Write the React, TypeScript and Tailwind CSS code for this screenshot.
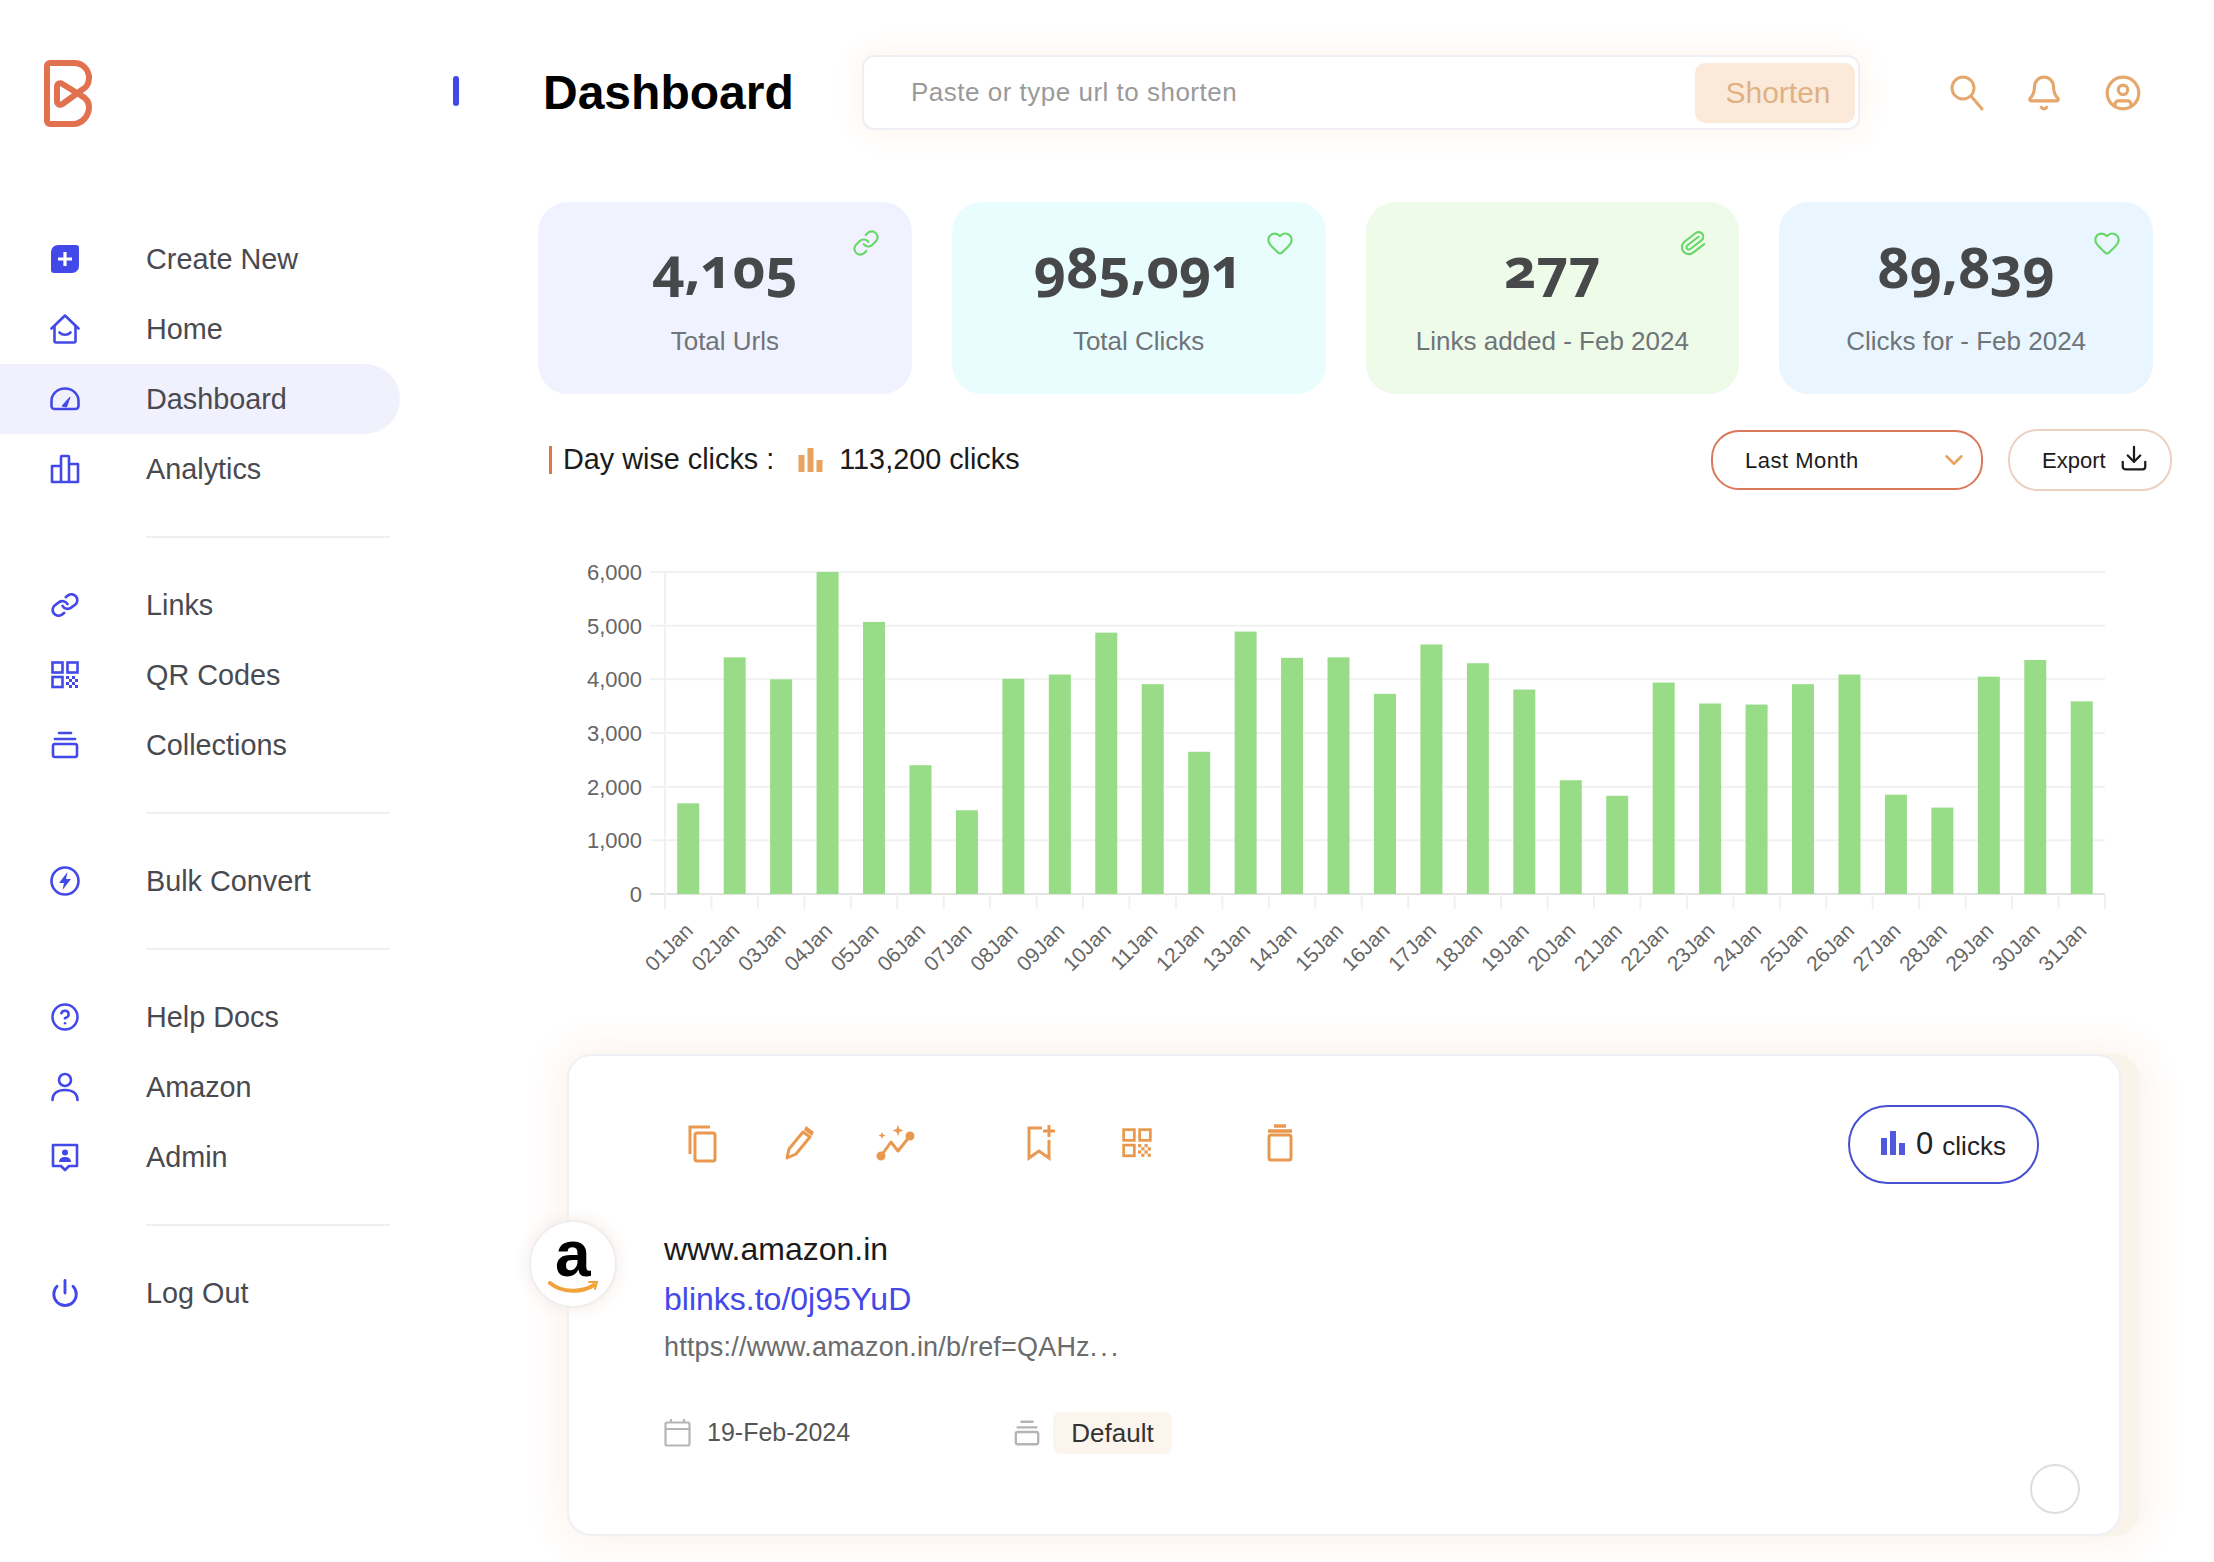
import { Bell, CircleHelp, CircleUser, Heart, Link as LinkIcon, Paperclip, Power, ChevronDown, Download } from "lucide-react";
import type { ReactNode } from "react";

const QrIcon = ({ size = 30 }: { size?: number }) => (
	<svg viewBox="0 0 30 30" width={size} height={size} fill="none" stroke="currentColor" strokeWidth="2.6">
		<rect x="2.5" y="2.5" width="10" height="10" />
		<rect x="17.5" y="2.5" width="10" height="10" />
		<rect x="2.5" y="17" width="10" height="10" />
		<g fill="currentColor" stroke="none">
			<rect x="16" y="16" width="3" height="3" />
			<rect x="22" y="16" width="3" height="3" />
			<rect x="19" y="19" width="3" height="3" />
			<rect x="25" y="19" width="3" height="3" />
			<rect x="16" y="22" width="3" height="3" />
			<rect x="22" y="22" width="3" height="3" />
			<rect x="19" y="25" width="3" height="3" />
			<rect x="25" y="25" width="3" height="3" />
		</g>
	</svg>
);

const StackIcon = ({ size = 30 }: { size?: number }) => (
	<svg viewBox="0 0 30 30" width={size} height={size} fill="none" stroke="currentColor" strokeWidth="2.6" strokeLinecap="round">
		<path d="M9 3h12" />
		<path d="M5 9h20" />
		<rect x="3" y="14" width="24" height="13" rx="2" />
	</svg>
);

const BarsIcon = ({ className }: { className: string }) => (
	<svg viewBox="0 0 24 24" className={className} fill="currentColor">
		<rect x="0" y="7" width="6" height="17" />
		<rect x="9" y="0" width="6" height="24" />
		<rect x="18" y="12" width="6" height="12" />
	</svg>
);

const navIcons: Record<string, ReactNode> = {
	create: (
		<svg viewBox="0 0 30 30" className="w-[30px] h-[30px]">
			<path d="M8 1h18a3 3 0 0 1 3 3v18a7 7 0 0 1-7 7H4a3 3 0 0 1-3-3V8a7 7 0 0 1 7-7z" fill="#4349e8" />
			<path d="M15 8v14M8 15h14" stroke="#fff" strokeWidth="3.2" />
		</svg>
	),
	home: (
		<svg viewBox="0 0 30 30" className="w-[30px] h-[30px]" fill="none" stroke="currentColor" strokeWidth="2.6" strokeLinejoin="round" strokeLinecap="round">
			<path d="M1.5 14.5 15 1.5l13.5 13" />
			<path d="M4.5 12v15a1.5 1.5 0 0 0 1.5 1.5h18a1.5 1.5 0 0 0 1.5-1.5V12" />
			<path d="M9.5 18.5c3 3 8 3 11 0" />
		</svg>
	),
	gauge: (
		<svg viewBox="0 0 30 24" className="w-[30px] h-[24px]" fill="none" stroke="currentColor" strokeWidth="2.6" strokeLinejoin="round">
			<path d="M1.5 14a13.5 12.5 0 0 1 27 0v5a3 3 0 0 1-3 3h-21a3 3 0 0 1-3-3z" />
			<path d="M12 19 20 10l-3.500 10z" fill="currentColor" strokeWidth="1" />
		</svg>
	),
	bars: (
		<svg viewBox="0 0 30 30" className="w-[30px] h-[30px]" fill="none" stroke="currentColor" strokeWidth="2.6" strokeLinejoin="round">
			<path d="M2 12h9v16H2zM11 3a1 1 0 0 1 1-1h6a1 1 0 0 1 1 1v25h-8zM19 10h9v18h-9z" />
		</svg>
	),
	link: <LinkIcon size={28} strokeWidth={2.3} className="rotate-[8deg]" />,
	qr: <QrIcon />,
	stack: <StackIcon />,
	bolt: (
		<svg viewBox="0 0 30 30" className="w-[30px] h-[30px]" fill="none" stroke="currentColor" strokeWidth="2.6">
			<circle cx="15" cy="15" r="13.500" />
			<path d="M17.500 6 9 17h5l-1.500 7L21 13h-5z" fill="currentColor" stroke="none" />
		</svg>
	),
	help: <CircleHelp size={34} strokeWidth={2} />,
	user: (
		<svg viewBox="0 0 30 30" className="w-[30px] h-[30px]" fill="none" stroke="currentColor" strokeWidth="2.6" strokeLinecap="round">
			<circle cx="15" cy="8" r="6" />
			<path d="M2.500 28c0-7 5.500-10 12.500-10s12.500 3 12.500 10" />
		</svg>
	),
	admin: (
		<svg viewBox="0 0 30 30" className="w-[30px] h-[30px]" fill="none" stroke="currentColor" strokeWidth="2.6" strokeLinejoin="round">
			<path d="M3 3h24v21h-8l-4 4-4-4H3z" />
			<circle cx="15" cy="10.500" r="3" fill="currentColor" stroke="none" />
			<path d="M9 20c0-3.500 2.500-5 6-5s6 1.500 6 5z" fill="currentColor" stroke="none" />
		</svg>
	),
	power: <Power size={30} strokeWidth={2.3} />,
};

const navGroups = [
	[
		{ label: "Create New", icon: "create" },
		{ label: "Home", icon: "home" },
		{ label: "Dashboard", icon: "gauge", active: true },
		{ label: "Analytics", icon: "bars" },
	],
	[
		{ label: "Links", icon: "link" },
		{ label: "QR Codes", icon: "qr" },
		{ label: "Collections", icon: "stack" },
	],
	[{ label: "Bulk Convert", icon: "bolt" }],
	[
		{ label: "Help Docs", icon: "help" },
		{ label: "Amazon", icon: "user" },
		{ label: "Admin", icon: "admin" },
	],
	[{ label: "Log Out", icon: "power" }],
];

const stats = [
	{ value: "4,105", label: "Total Urls", bg: "bg-[#f0f2ff]", icon: <LinkIcon size={28} strokeWidth={1.8} /> },
	{ value: "985,091", label: "Total Clicks", bg: "bg-[#e9fdff]", icon: <Heart size={28} strokeWidth={1.8} /> },
	{ value: "277", label: "Links added - Feb 2024", bg: "bg-[#eefbe9]", icon: <Paperclip size={28} strokeWidth={1.8} className="rotate-[8deg]" /> },
	{ value: "89,839", label: "Clicks for - Feb 2024", bg: "bg-[#e9f6ff]", icon: <Heart size={28} strokeWidth={1.8} /> },
];

const dayClicks = [
	1690, 4410, 4000, 6000, 5070, 2400, 1560, 4010, 4090, 4870, 3910, 2650, 4890, 4400, 4410, 3730, 4650, 4300, 3810, 2120,
	1830, 3940, 3550, 3530, 3910, 4090, 1850, 1610, 4050, 4360, 3590,
];

// numbers below are local to the svg, which starts at x=560 on the page
const ClicksChart = () => {
	const top = 16;
	const base = 338;
	const left = 105;
	const step = 46.45;
	return (
		<svg width="1560" height="430" className="block" fontFamily="'Liberation Sans', sans-serif">
			{[6000, 5000, 4000, 3000, 2000, 1000, 0].map((tick) => {
				const y = base - (tick / 6000) * (base - top);
				return (
					<g key={tick}>
						<line x1="90" x2="1545" y1={y} y2={y} stroke={tick === 0 ? "#e2e2e2" : "#f1f1f1"} strokeWidth="2" />
						<text x="82" y={y + 8} textAnchor="end" fontSize="22" fill="#666">
							{tick.toLocaleString("en-US")}
						</text>
					</g>
				);
			})}
			<line x1={left} x2={left} y1={top} y2={base + 15} stroke="#f1f1f1" strokeWidth="2" />
			{dayClicks.map((clicks, i) => {
				const h = (clicks / 6000) * (base - top);
				const cx = left + step * i + step / 2;
				const label = `${String(i + 1).padStart(2, "0")}Jan`;
				return (
					<g key={i}>
						<line x1={left + step * (i + 1)} x2={left + step * (i + 1)} y1={base} y2={base + 15} stroke="#f1f1f1" strokeWidth="2" />
						<rect x={cx - 11} y={base - h} width="22" height={h} fill="#98dc88" />
						<text
							x={cx + 6}
							y={base + 38}
							textAnchor="end"
							fontSize="21"
							fill="#666"
							transform={`rotate(-45 ${cx + 6} ${base + 38})`}
						>
							{label}
						</text>
					</g>
				);
			})}
		</svg>
	);
};

const App = () => {
	return (
		<div className="flex w-[2214px] h-[1562px] overflow-hidden bg-white font-['Liberation_Sans',sans-serif]">
			{/* Sidebar */}
			<aside className="w-[400px] shrink-0">
				<div className="ml-[44px] mt-[60px] h-[67px]">
					<svg width="48" height="67" viewBox="0 0 48 67" fill="none" stroke="#e2714f" strokeWidth="6" strokeLinejoin="round">
						<path d="M3 6a3 3 0 0 1 3-3h24c9 0 15 7 15 15 0 5-3 10-8 12.500L18.500 44c-3 2-5.500 0-5.500-3V27c0-3 2.500-5 5.500-3L37 35.500c5 2.500 8 6 8 11.500 0 9-7 17-16 17H6a3 3 0 0 1-3-3z" />
					</svg>
				</div>
				<nav className="mt-[97px]">
					{navGroups.map((group, groupIndex) => (
						<div key={groupIndex}>
							{group.map((item) => (
								<div
									key={item.label}
									className={`flex items-center h-[70px] pl-[50px] rounded-r-full ${"active" in item ? "bg-[#f0f1fd]" : ""}`}
								>
									<div className="w-[30px] flex justify-center text-[#4349e8]">{navIcons[item.icon]}</div>
									<span className="ml-[66px] pt-[1px] text-[28.8px] text-[#494a50]">{item.label}</span>
								</div>
							))}
							{groupIndex < navGroups.length - 1 && <div className="ml-[146px] w-[244px] h-[2px] my-[32px] bg-[#eeeef3]" />}
						</div>
					))}
				</nav>
			</aside>

			<main className="flex-1">
				{/* Top bar */}
				<div className="flex items-center pl-[53px] pt-[55px]">
					<div className="w-[6px] h-[30px] mb-[4px] rounded-full bg-[#4349e8]" />
					<h1 className="ml-[84px] w-[250px] text-[48px] font-bold text-black whitespace-nowrap">Dashboard</h1>
					<div className="ml-[69px] w-[998px] h-[75px] flex items-center justify-between rounded-[12px] border-2 border-[#f0eef5] bg-white pl-[47px] pr-[3px] shadow-[0_0_30px_6px_#fff5f0]">
						<span className="text-[26px] tracking-[0.5px] text-[#9a9a9a]">Paste or type url to shorten</span>
						<button className="w-[160px] h-[60px] pl-[6px] rounded-[10px] bg-[#fbeada] text-[30px] text-[#dfb183]">Shorten</button>
					</div>
					<div className="ml-[90px] flex items-center text-[#e5a76b]">
						<svg viewBox="0 0 34 36" className="w-[34px] h-[36px]" fill="none" stroke="currentColor" strokeWidth="3" strokeLinecap="round">
							<circle cx="13" cy="13" r="11" />
							<path d="M21 21l11 13" />
						</svg>
						<Bell size={38} strokeWidth={2} className="ml-[41px]" />
						<CircleUser size={38} strokeWidth={2} className="ml-[41px]" />
					</div>
				</div>

				{/* Stat cards */}
				<div className="ml-[138px] mt-[72px] w-[1615px] grid grid-cols-4 gap-[40px]">
					{stats.map((stat) => (
						<div key={stat.label} className={`relative h-[192px] rounded-[30px] pt-[29px] flex flex-col items-center ${stat.bg}`}>
							<div className="absolute top-[27px] right-[32px] text-[#66d666]">{stat.icon}</div>
							<span className="h-[70px] leading-[70px] text-[56px] font-bold oldstyle-nums text-[#47484a] font-['Open_Sans',sans-serif]">
								{stat.value}
							</span>
							<span className="mt-[22px] text-[26px] leading-[36px] text-[#6f7478]">{stat.label}</span>
						</div>
					))}
				</div>

				{/* Day wise clicks */}
				<div className="ml-[149px] mt-[35px] w-[1623px] flex items-center justify-between">
					<div className="flex items-center text-[28.8px] text-[#1b1b1b]">
						<div className="w-[3px] h-[28px] bg-[#e2714f]" />
						<span className="ml-[11px]">Day wise clicks :</span>
						<BarsIcon className="ml-[24px] w-[25px] h-[24px] text-[#e8a45f]" />
						<span className="ml-[16px]">113,200 clicks</span>
					</div>
					<div className="flex items-center gap-[25px]">
						<button className="w-[272px] h-[60px] flex items-center justify-between pl-[32px] pr-[12px] rounded-[28px] border-2 border-[#d9785a] text-[22px] tracking-[0.5px] text-[#1b1b1b]">
							Last Month
							<ChevronDown size={30} strokeWidth={2} className="text-[#e8a45f]" />
						</button>
						<button className="w-[164px] h-[62px] flex items-center justify-between pl-[32px] pr-[21px] rounded-[30px] border-2 border-[#ecd0c4] text-[22px] text-[#1b1b1b]">
							Export
							<Download size={30} strokeWidth={1.8} className="mb-[4px]" />
						</button>
					</div>
				</div>

				{/* Chart */}
				<div className="ml-[160px] mt-[65px]">
					<ClicksChart />
				</div>

				{/* Link card */}
				<div className="relative ml-[167px] mt-[68px] w-[1573px] h-[482px] rounded-[26px] bg-[#faf3e9] pr-[19px] shadow-[0_0_40px_12px_#fdf4ef]">
					<div className="relative h-full rounded-[24px] border-2 border-[#f0eff4] bg-white pt-[49px] pl-[95px] pr-[80px]">
						<div className="flex items-center justify-between">
							<div className="ml-[20px] mb-[4px] flex items-center gap-[105px] text-[#e9994f]">
								<div className="flex items-center gap-[56px]">
									<svg viewBox="0 0 40 40" className="w-[40px] h-[40px]" fill="none" stroke="currentColor" strokeWidth="3">
										<path d="M26 4H6v27" />
										<rect x="11" y="10" width="20" height="28" rx="2" />
									</svg>
									<svg viewBox="0 0 40 40" className="w-[40px] h-[40px]" fill="none" stroke="currentColor" strokeWidth="3" strokeLinejoin="round">
										<path d="M7 35l2-9L23 9l7 5-14 17z" />
										<path d="M26 3l8 6-2 4-8-6z" fill="currentColor" stroke="none" />
									</svg>
									<svg viewBox="0 0 40 40" className="w-[40px] h-[40px]" fill="none" stroke="currentColor" strokeWidth="3" strokeLinejoin="round">
										<path d="M5 33 15 19l7 9 12-15" />
										<circle cx="5" cy="33" r="3" fill="currentColor" />
										<circle cx="34" cy="13" r="3" fill="currentColor" />
										<path d="M22 2l1.500 4 4 1.500-4 1.500L22 13l-1.500-4-4-1.500 4-1.500z" fill="currentColor" stroke="none" />
										<path d="M6 9l1 2.500 2.500 1-2.500 1L6 16l-1-2.500-2.500-1 2.500-1z" fill="currentColor" stroke="none" />
									</svg>
								</div>
								<div className="flex items-center gap-[56px]">
									<svg viewBox="0 0 40 40" className="w-[40px] h-[40px]" fill="none" stroke="currentColor" strokeWidth="3" strokeLinejoin="miter">
										<path d="M21 5H8v30l10-7 10 7V17" />
										<path d="M28 2v12M22 8h12" />
									</svg>
									<div className="w-[40px] flex justify-center">
										<QrIcon size={32} />
									</div>
								</div>
								<svg viewBox="0 0 40 40" className="-ml-[2px] w-[40px] h-[40px]" fill="none" stroke="currentColor" strokeWidth="3" strokeLinejoin="round">
									<path d="M14 3h12" strokeWidth="3.500" />
									<path d="M8 8h24" strokeWidth="3.500" />
									<rect x="9" y="12" width="22" height="25" rx="2" />
								</svg>
							</div>
							<div className="w-[191px] h-[79px] flex items-center justify-center rounded-full border-2 border-[#4650d0] text-[#222]">
								<BarsIcon className="w-[24px] h-[24px] text-[#5059dc] mb-[4px]" />
								<span className="ml-[11px] text-[31px]">0</span>
								<span className="ml-[9px] text-[26px] mt-[3px]">clicks</span>
							</div>
						</div>

						<p className="mt-[40px] h-[50px] leading-[50px] text-[32px] text-[#1b1b1b]">www.amazon.in</p>
						<p className="h-[50px] leading-[50px] text-[32px] text-[#4348e6]">blinks.to/0j95YuD</p>
						<p className="h-[46px] leading-[46px] text-[27px] text-[#6b6b6b] tracking-[0.2px]">
							https://www.amazon.in/b/ref=QAHz<span className="tracking-[3px]">...</span>
						</p>

						<div className="mt-[42px] flex items-center h-[42px]">
							<div className="w-[349px] flex items-center">
								<svg viewBox="0 0 27 28" className="w-[27px] h-[28px]" fill="none" stroke="#b5b5b5" strokeWidth="2.2">
									<rect x="1.500" y="3.500" width="24" height="23" rx="1.500" />
									<path d="M1.500 10h24M7 0v4M20 0v4" />
								</svg>
								<span className="ml-[16px] text-[25px] text-[#555]">19-Feb-2024</span>
							</div>
							<div className="text-[#b5b5b5]">
								<StackIcon size={28} />
							</div>
							<span className="ml-[12px] w-[119px] h-[42px] flex items-center justify-center rounded-[8px] bg-[#fbf5ee] text-[26px] text-[#333]">
								Default
							</span>
						</div>

						<div className="absolute right-[39px] bottom-[20px] w-[50px] h-[50px] rounded-full border-2 border-[#dedee0]" />
					</div>

					{/* Site logo */}
					<div className="absolute left-[-38px] top-[166px] w-[88px] h-[88px] rounded-full border-2 border-[#eeeeee] bg-white shadow-[0_0_16px_2px_#f6eeea]">
						<span className="absolute left-[24px] top-[7px] text-[64px] leading-[50px] font-bold text-black">a</span>
						<svg viewBox="0 0 52 16" className="absolute left-[17px] top-[58px] w-[52px] h-[16px]" fill="none" stroke="#f0a33a" strokeLinecap="round">
							<path d="M2 3c12 10 32 10 44 2" strokeWidth="4" />
							<path d="M41 2h8l-2 7" strokeWidth="2" />
						</svg>
					</div>
				</div>
			</main>
		</div>
	);
};

export default App;
